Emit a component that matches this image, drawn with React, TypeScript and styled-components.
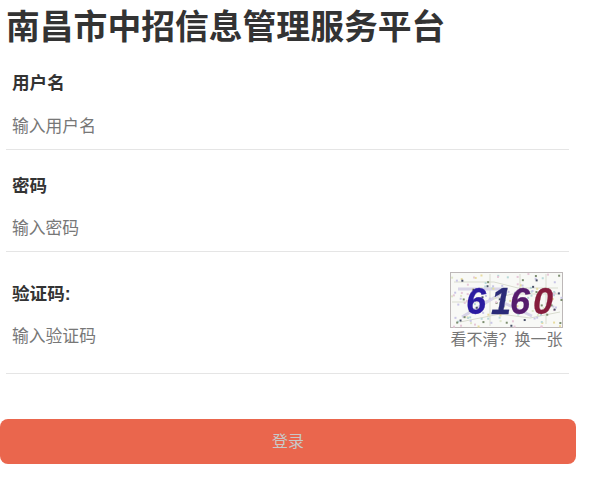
import React from 'react';
import styled, { createGlobalStyle } from 'styled-components';

const GlobalStyle = createGlobalStyle`
  html, body {
    margin: 0;
    padding: 0;
    background: #fff;
  }
  body {
    font-family: "Liberation Sans", "Noto Sans CJK SC", sans-serif;
    color: #333;
  }
`;

const Page = styled.div`
  width: 576px;
  height: 477px;
  display: flex;
  flex-direction: column;
`;

const Title = styled.h1`
  margin: 0;
  padding: 5px 0 0 6px;
  height: 45px;
  font-size: 33.8px;
  line-height: 44px;
  font-weight: 700;
  color: #333;
`;

const Form = styled.form`
  display: flex;
  flex-direction: column;
  margin: 0;
`;

const Field = styled.div<{ $height: number }>`
  width: 563px;
  height: ${(p) => p.$height}px;
  margin-left: 6px;
  box-sizing: border-box;
  border-bottom: 1px solid #e5e5e5;
  padding-left: 6px;
  display: flex;
  flex-direction: column;
`;

const Label = styled.label<{ $top: number }>`
  display: block;
  padding-top: ${(p) => p.$top}px;
  font-size: 17.6px;
  line-height: 22px;
  font-weight: 700;
  color: #333;
`;

const TextInput = styled.input<{ $top: number }>`
  display: block;
  margin-top: ${(p) => p.$top}px;
  padding: 0;
  border: 0;
  outline: 0;
  width: 400px;
  height: 24px;
  font: inherit;
  font-size: 16.8px;
  line-height: 24px;
  background: transparent;
  &::placeholder {
    color: #777;
    opacity: 1;
  }
`;

const CaptchaRow = styled.div`
  display: flex;
  justify-content: space-between;
  align-items: flex-start;
`;

const CaptchaBox = styled.div`
  margin: 20px 6px 0 0;
  width: 113px;
  display: flex;
  flex-direction: column;
  align-items: center;
`;

const CaptchaImage = styled.svg`
  display: block;
  width: 113px;
  height: 56px;
`;

const CaptchaHint = styled.span`
  font-size: 16px;
  line-height: 24px;
  color: #777;
  white-space: nowrap;
`;

const SubmitButton = styled.button`
  margin-top: 45px;
  width: 576px;
  height: 45px;
  padding: 0 0 4px;
  border: 0;
  border-radius: 8px;
  background: #ea664d;
  color: #c8c8c8;
  font: inherit;
  font-size: 16px;
`;

const rand = (n: number) => {
  const v = Math.sin(n * 12.9898) * 43758.5453;
  return v - Math.floor(v);
};

const noiseColours = ['#dfe6c8', '#c9c6e6', '#e8dca0', '#b8d8d8', '#e6c8d8', '#7d8f70', '#4a5068'];

const noise = Array.from({ length: 150 }, (_, i) => ({
  x: rand(i + 1) * 110 + 1,
  y: rand(i + 500) * 53 + 1,
  c: noiseColours[Math.floor(rand(i + 900) * noiseColours.length)],
}));

const Captcha = () => (
  <CaptchaImage viewBox="0 0 113 56">
    <rect x="0.5" y="0.5" width="112" height="55" fill="#f8f9f6" stroke="#bdb8b8" />
    <g filter="url(#soft)">
      <path d="M4 10h40l24 6h40M2 30h30l30-8h48M10 50l40-8 30 4 30-6M40 2v52M96 2v50M70 2v20" stroke="#d9dccf" fill="none" />
      <path d="M8 17h44M12 45l40-24M52 30l30 14" stroke="#d8d4e8" strokeWidth="3" fill="none" />
      {noise.map((d, i) => (
        <rect key={i} x={d.x} y={d.y} width="2" height="2" fill={d.c} />
      ))}
      <g fontFamily='"Liberation Sans", sans-serif' fontStyle="italic" fontWeight="700" fontSize="36">
        <text x="16" y="42" fill="#2a1aa0" stroke="#2a1aa0" strokeWidth="0.3">6</text>
        <text x="41" y="42" fill="#2b2c78" stroke="#2b2c78" strokeWidth="0.3">1</text>
        <text x="60" y="42" fill="#551a6c" stroke="#551a6c" strokeWidth="0.3">6</text>
        <text x="83" y="42" fill="#861f3c" stroke="#861f3c" strokeWidth="0.3">0</text>
      </g>
    </g>
    <defs>
      <filter id="soft" x="0" y="0" width="100%" height="100%">
        <feGaussianBlur stdDeviation="0.5" />
      </filter>
    </defs>
  </CaptchaImage>
);

const App = () => (
  <Page>
    <GlobalStyle />
    <Title>南昌市中招信息管理服务平台</Title>
    <Form onSubmit={(e) => e.preventDefault()}>
      <Field $height={100}>
        <Label $top={22}>用户名</Label>
        <TextInput $top={21} placeholder="输入用户名" />
      </Field>
      <Field $height={102}>
        <Label $top={25}>密码</Label>
        <TextInput $top={20} placeholder="输入密码" />
      </Field>
      <Field $height={122}>
        <CaptchaRow>
          <div>
            <Label $top={31}>验证码:</Label>
            <TextInput $top={20} placeholder="输入验证码" />
          </div>
          <CaptchaBox>
            <Captcha />
            <CaptchaHint>{'看不清\uFF1F换一张'}</CaptchaHint>
          </CaptchaBox>
        </CaptchaRow>
      </Field>
      <SubmitButton type="submit">登录</SubmitButton>
    </Form>
  </Page>
);

export default App;
